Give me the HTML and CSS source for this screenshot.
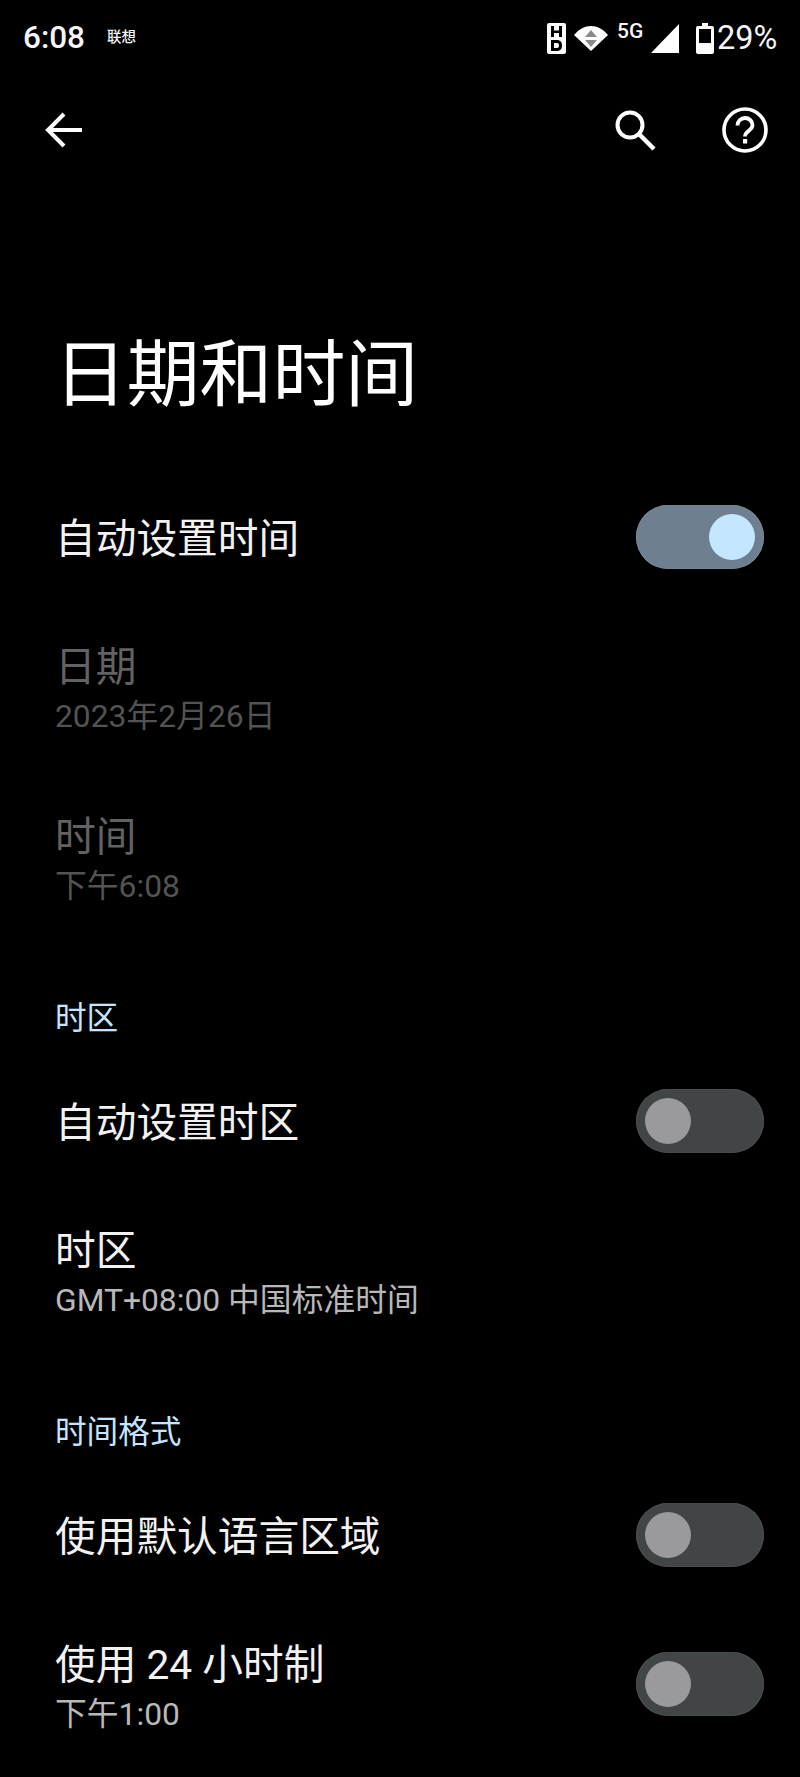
FILE: index.html
```html
<!DOCTYPE html>
<html lang="zh-CN">
<head>
<meta charset="utf-8">
<title>日期和时间</title>
<link rel="stylesheet" href="styles.css">
</head>
<body>
<div class="screen">
  <header class="status">
    <div class="status-left">
      <span class="clock">6:08</span>
      <span class="carrier">联想</span>
    </div>
    <div class="status-right">
      <svg class="ic-hd" viewBox="0 0 19 31"><path fill="#fff" fill-rule="evenodd" d="M2 0h15a2 2 0 0 1 2 2v27a2 2 0 0 1-2 2H2a2 2 0 0 1-2-2V2a2 2 0 0 1 2-2zM4 3v11h3V10h5v4h3V3h-3v4.500H7V3zM4 17v11h6c3.500 0 5-2.300 5-5.500S13.500 17 10 17zM7 20h3c1.500 0 2 1 2 2.500S11.500 25 10 25H7z"/></svg>
      <svg class="ic-wifi" viewBox="0 0 34 25"><path fill="#fff" d="M17 25 0 9C5 3 11 0 17 0s12 3 17 9z"/><path fill="#8a8a8a" d="M17 4l6 7H11zM17 21l-6-7h12z"/></svg>
      <span class="net">5G</span>
      <svg class="ic-signal" viewBox="0 0 28 29"><path fill="#fff" d="M28 0v29H0z"/></svg>
      <svg class="ic-batt" viewBox="0 0 18 31"><path fill="#fff" fill-rule="evenodd" d="M6 0h6v3h4a2 2 0 0 1 2 2v24a2 2 0 0 1-2 2H2a2 2 0 0 1-2-2V5a2 2 0 0 1 2-2h4zM3 6v14h12V6z"/></svg>
      <span class="pct">29%</span>
    </div>
  </header>

  <nav class="toolbar">
    <svg class="ic-back" viewBox="0 0 38 36"><path fill="none" stroke="#fff" stroke-width="4" d="M37 18H3M19 2 3 18l16 16"/></svg>
    <div class="toolbar-end">
      <svg class="ic-search" viewBox="0 0 42 42"><circle cx="16" cy="16" r="12.500" fill="none" stroke="#fff" stroke-width="4"/><path fill="none" stroke="#fff" stroke-width="4.500" d="M25 25l15 15"/></svg>
      <svg class="ic-help" viewBox="0 0 46 46"><circle cx="23" cy="23" r="21" fill="none" stroke="#fff" stroke-width="3.600"/><path fill="none" stroke="#fff" stroke-width="3.800" d="M15.500 18.500c0-4.500 3.500-7.500 7.500-7.500s7.500 3 7.500 7c0 5.500-7.500 6-7.500 11.500"/><rect x="21" y="32" width="4.200" height="4.500" fill="#fff"/></svg>
    </div>
  </nav>

  <h1 class="page-title">日期和时间</h1>

  <main class="list">
    <div class="row">
      <div class="text"><div class="label solo">自动设置时间</div></div>
      <span class="switch on"><span class="thumb"></span></span>
    </div>
    <div class="row tall disabled">
      <div class="text"><div class="label">日期</div><div class="sub">2023年2月26日</div></div>
    </div>
    <div class="row tall disabled">
      <div class="text"><div class="label">时间</div><div class="sub">下午6:08</div></div>
    </div>

    <h2 class="section">时区</h2>
    <div class="row">
      <div class="text"><div class="label solo">自动设置时区</div></div>
      <span class="switch"><span class="thumb"></span></span>
    </div>
    <div class="row tall">
      <div class="text"><div class="label">时区</div><div class="sub">GMT+08:00 中国标准时间</div></div>
    </div>

    <h2 class="section">时间格式</h2>
    <div class="row">
      <div class="text"><div class="label solo">使用默认语言区域</div></div>
      <span class="switch"><span class="thumb"></span></span>
    </div>
    <div class="row tall">
      <div class="text"><div class="label">使用 24 小时制</div><div class="sub">下午1:00</div></div>
      <span class="switch"><span class="thumb"></span></span>
    </div>
  </main>
</div>
</body>
</html>
```

FILE: styles.css
```css
* { box-sizing: border-box; }
html, body { margin: 0; padding: 0; background: #000; }
body {
  font-family: Roboto, "Noto Sans CJK SC", sans-serif;
  color: #f2f2f2;
}
.screen { width: 800px; height: 1777px; overflow: hidden; background: #000; }

.status {
  height: 76px;
  padding: 0 24px 0 23px;
  display: flex;
  justify-content: space-between;
  align-items: center;
  color: #f5f5f5;
}
.status-left { display: flex; align-items: center; gap: 22px; }
.clock { font-size: 31.500px; font-weight: 500; line-height: 1; }
.carrier { font-size: 14.500px; font-weight: 500; line-height: 1; margin-top: 1px; }
.status-right { display: flex; align-items: center; flex: none; }
.ic-hd { width: 19px; height: 31px; flex: none; }
.ic-wifi { width: 34px; height: 25px; margin-left: 8px; flex: none; }
.net { width: 27px; font-size: 21px; font-weight: 500; line-height: 1; margin-left: 9px; margin-top: -13px; flex: none; }
.ic-signal { width: 28px; height: 29px; margin-left: 7px; flex: none; }
.ic-batt { width: 18px; height: 31px; margin-left: 17px; flex: none; }
.pct { width: 59px; font-size: 32.500px; line-height: 1; margin-left: 3px; flex: none; white-space: nowrap; }

.toolbar {
  height: 108px;
  padding: 0 32px 0 45px;
  display: flex;
  justify-content: space-between;
  align-items: center;
}
.ic-back { width: 38px; height: 36px; flex: none; }
.toolbar-end { display: flex; align-items: center; gap: 66px; }
.ic-search { width: 42px; height: 42px; }
.ic-help { width: 46px; height: 46px; }

.page-title {
  margin: 0;
  padding: 145px 0 0 54px;
  height: 285px;
  font-size: 72.800px;
  font-weight: 400;
  line-height: 92px;
  color: #fff;
}

.row {
  height: 136px;
  padding: 0 36px 0 55px;
  display: flex;
  justify-content: space-between;
  align-items: center;
}
.row.tall { height: 170px; }
.row.tall .switch { margin-bottom: 8px; }
.label { font-size: 40.700px; line-height: 52px; }
.solo { margin-top: 4px; }
.sub { font-size: 31.800px; line-height: 46px; color: #b8b8b8; }
.disabled .label { color: #626262; }
.disabled .sub { color: #535353; }

.section {
  margin: 0;
  padding: 50px 0 10px 55px;
  font-size: 31.600px;
  font-weight: 400;
  line-height: 48px;
  color: #c3e5ff;
}

.switch {
  width: 128px;
  height: 64px;
  padding: 9px;
  border-radius: 32px;
  background: #424546;
  box-shadow: inset 0 0 0 1px #4c4c4c;
  display: flex;
  flex: none;
}
.switch.on { background: #6e808f; box-shadow: inset 0 0 0 1px #76848e; justify-content: flex-end; }
.thumb {
  width: 46px;
  height: 46px;
  border-radius: 50%;
  background: #9a9a9c;
}
.on .thumb { background: #c5e6ff; }
```
